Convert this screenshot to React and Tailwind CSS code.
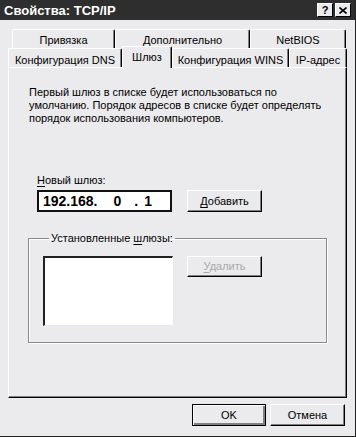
import React from 'react';

const font = "font-['Liberation_Sans',Arial,sans-serif]";

function Btn({ children, className = '', isDefault, disabled }) {
  const edge = isDefault
    ? 'border border-black shadow-[inset_1px_1px_0_#fff,inset_-2px_-2px_0_#808080]'
    : 'border border-t-white border-l-white border-r-black border-b-black shadow-[inset_-1px_-1px_0_#808080]';
  return (
    <div className={`flex items-center justify-center bg-[#ebeaec] text-[11px] ${edge} ${disabled ? 'text-[#a8a8a8]' : 'text-black'} ${className}`}>
      {children}
    </div>
  );
}

function Tab({ label, className = '', selected }) {
  return (
    <div
      className={`flex justify-center border-l border-t border-white border-r border-r-black rounded-t-[2px] shadow-[inset_-1px_0_0_#808080] text-[11px] leading-[13px] whitespace-nowrap ${
        selected ? 'h-[22px] pt-[4px] bg-[#ebeaec] relative z-10 -mb-[1px]' : 'h-[19px] pt-[4px]'
      } ${className}`}
    >
      {label}
    </div>
  );
}

export default function App() {
  return (
    <div className={`w-[356px] h-[437px] bg-[#ebeaec] flex flex-col border-r border-b border-[#222] ${font} text-black`}>
      {/* title bar */}
      <div className="h-[20px] bg-[#2e2e2e] flex items-center pl-[4px] pr-[4px]">
        <span className="text-white font-bold text-[13px] leading-[15px]">Свойства: TCP/IP</span>
        <div className="ml-auto flex gap-[2px]">
          <div className="w-[16px] h-[14px] bg-[#ebeaec] border border-t-white border-l-white border-r-black border-b-black flex items-center justify-center text-[11px] font-bold leading-none">?</div>
          <div className="w-[16px] h-[14px] bg-[#ebeaec] border border-t-white border-l-white border-r-black border-b-black flex items-center justify-center">
            <svg width="8" height="7" viewBox="0 0 8 7">
              <path d="M0.5 0.5 L7.5 6.5 M7.5 0.5 L0.5 6.5" stroke="#000" strokeWidth="1.6" />
            </svg>
          </div>
        </div>
      </div>

      <div className="px-[8px] pt-[10px] flex flex-col">
        {/* tabs back row */}
        <div className="flex pl-[4px] h-[18px] items-end">
          <Tab label="Привязка" className="w-[103px] h-[18px]" />
          <Tab label="Дополнительно" className="w-[135px] h-[18px]" />
          <Tab label="NetBIOS" className="w-[96px] h-[18px]" />
        </div>
        {/* tabs front row */}
        <div className="flex h-[19px] items-end">
          <Tab label="Конфигурация DNS" className="w-[114px] pt-[5px]" />
          <Tab label="Шлюз" selected className="w-[50px] pt-[4px]" />
          <Tab label="Конфигурация WINS" className="w-[117px] pt-[5px]" />
          <Tab label="IP-адрес" className="w-[58px] pt-[5px]" />
        </div>

        {/* panel */}
        <div className="h-[331px] border-l border-t border-white border-r border-b border-r-black border-b-black shadow-[inset_-1px_-1px_0_#808080] flex flex-col">
          <p className="pl-[20px] pt-[18px] text-[11px] leading-[13px] whitespace-nowrap">
            Первый шлюз в списке будет использоваться по
            <br />
            умолчанию. Порядок адресов в списке будет определять
            <br />
            порядок использования компьютеров.
          </p>

          <div className="pl-[28px] mt-[49px] text-[11px] leading-[13px]">
            <span className="underline underline-offset-2">Н</span>овый шлюз:
          </div>
          <div className="flex pl-[28px] mt-[3px]">
            <div className="w-[135px] h-[22px] bg-white border-2 border-[#111] flex items-center pl-[4px] text-[14px] font-bold leading-none">
              <span>192.168.</span>
              <span className="ml-[16px]">0</span>
              <span className="ml-[13px]">.</span>
              <span className="ml-[6px]">1</span>
            </div>
            <Btn className="ml-[15px] w-[75px] h-[22px]">
              <span><span className="underline underline-offset-2">Д</span>обавить</span>
            </Btn>
          </div>

          <fieldset className="ml-[19px] mt-[20px] w-[299px] h-[111px] border border-[#8a8a8a] shadow-[inset_1px_1px_0_#fff,1px_1px_0_#fff] px-[14px]">
            <legend className="ml-[6px] px-[2px] text-[11px] leading-[13px]">
              Установленные <span className="underline underline-offset-2">ш</span>люзы:
            </legend>
            <div className="flex mt-[11px]">
              <div className="w-[130px] h-[70px] bg-white border-l-2 border-t-2 border-[#222] border-r border-b border-r-white border-b-[#e8e8e8]" />
              <Btn disabled className="ml-[14px] w-[75px] h-[21px]">
                <span><span className="underline underline-offset-2">У</span>далить</span>
              </Btn>
            </div>
          </fieldset>
        </div>

        {/* dialog buttons */}
        <div className="flex justify-end gap-[4px] mt-[6px] pr-[2px]">
          <Btn isDefault className="w-[74px] h-[22px]">OK</Btn>
          <Btn className="w-[75px] h-[22px]">Отмена</Btn>
        </div>
      </div>
    </div>
  );
}
